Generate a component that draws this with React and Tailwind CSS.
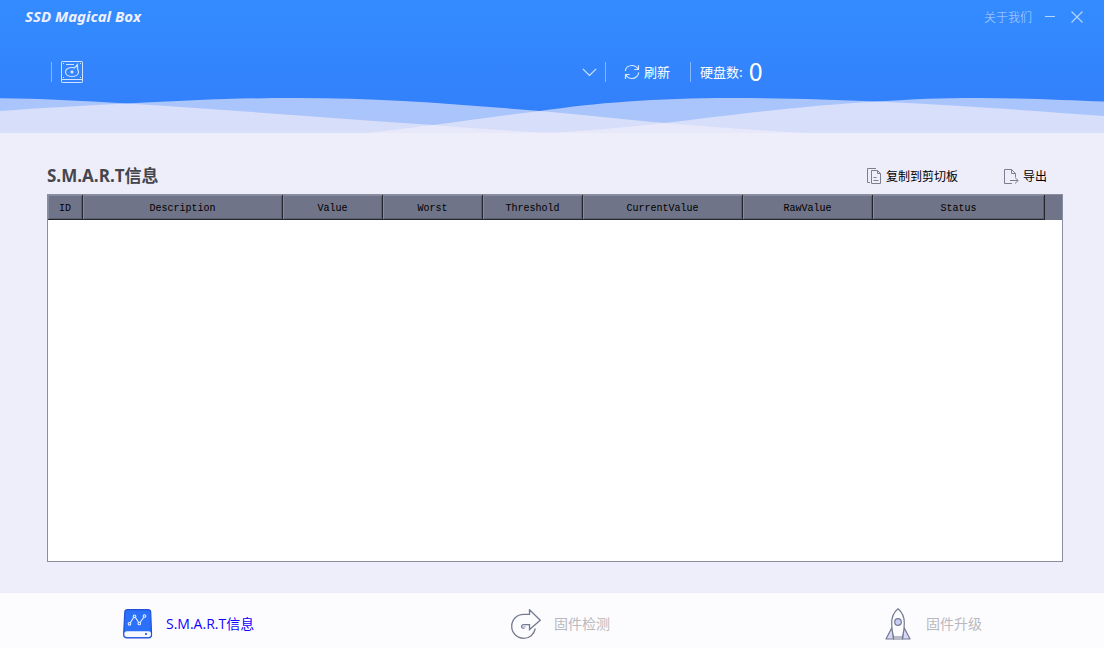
import React from "react";

const columns = [
  ["ID", "w-[35px]"],
  ["Description", "w-[200px]"],
  ["Value", "w-[100px]"],
  ["Worst", "w-[100px]"],
  ["Threshold", "w-[100px]"],
  ["CurrentValue", "w-[160px]"],
  ["RawValue", "w-[130px]"],
  ["Status", "w-auto"],
];

const cjk = "font-['Noto_Sans_CJK_SC',sans-serif]";
const mixed = "font-['Open_Sans','Noto_Sans_CJK_SC',sans-serif]";

function Waves() {
  return (
    <svg className="block h-[35px] w-full" viewBox="0 0 1104 35" preserveAspectRatio="none" fill="#f0eefa" fillOpacity="0.63" aria-hidden="true">
      <path d="M0 0.3C40 0.5 80 3 127 5.5C230 12 330 20 433 27Q490 32 560 35H0Z" />
      <path d="M0 13C40 10 85 7.5 127 5.5C190 2.5 235 0 295 0C380 0 455 6 540 13C585 17 620 21 664 25Q735 31 807 35H0Z" />
      <path d="M367 35Q400 31 433 27C470 22 505 17 540 13C595 5 655 0 732 0C785 0 830 1.5 877 3.5C955 7 1035 13 1104 18V35Z" />
      <path d="M545 35Q605 32 664 25C740 16 800 8 877 3.5C915 1 940 0 978 0C1020 0 1065 2 1104 3.5V35Z" />
    </svg>
  );
}

function DriveIcon() {
  return (
    <svg width="22" height="22" viewBox="0 0 22 22" fill="none" stroke="#cfe2ff" aria-hidden="true">
      <rect x="0.5" y="0.5" width="21" height="21" rx="0.6" />
      <path d="M0.5 18.5H21.5M5 3.5H13" />
      <path d="M16.500 3.500L13.500 6.800C9 5.800 4.500 7.500 4.500 11C4.500 13.700 7.500 15.500 11 15.500S17.500 13.700 17.500 11C17.500 9.500 16.500 8.500 16.500 7.500Z" strokeWidth="1.2" />
      <circle cx="11" cy="11" r="1.2" fill="#cfe2ff" />
      <path d="M2 2.500H3M19 2.500H20M2 16.500H3M19 16.500H20" />
    </svg>
  );
}

function RefreshIcon() {
  return (
    <svg width="16" height="16" viewBox="0 0 16 16" fill="none" stroke="#d9e8ff" strokeWidth="1.2" aria-hidden="true">
      <path d="M1.300 7C1.600 3.800 4.500 1.500 8 1.500C10.500 1.500 12.600 2.700 14 5M14.500 1.200V5.500H10.300" />
      <path d="M14.700 8.500C14.400 12 11.500 14.500 8 14.500C5.500 14.500 3.300 13.300 2 11M1.500 15V10.500H5.700" />
    </svg>
  );
}

function CopyIcon() {
  return (
    <svg width="15" height="17" viewBox="0 0 15 17" fill="none" stroke="#7b7f90" aria-hidden="true">
      <path d="M9 0.500H0.500V14.500H3M4.500 2.500H10.500L13.500 5.500V15.500H4.500ZM10.500 2.500V5.500H13.500M6.500 9.500H9.500M6.500 12.500H11.500" />
    </svg>
  );
}

function ExportIcon() {
  return (
    <svg width="15" height="17" viewBox="0 0 15 17" fill="none" stroke="#7b7f90" aria-hidden="true">
      <path d="M8 15.500H0.500V1.500H7.500L11.500 5.500V9M7.500 1.500V5.500H11.500M6 12.500H14M11 9.500L14.200 12.500L11 15.500" />
    </svg>
  );
}

function SmartIcon() {
  return (
    <svg width="30" height="30" viewBox="0 0 30 30" fill="none" aria-hidden="true">
      <path d="M4.500 0.700H25Q27.500 0.700 27.700 3L28.500 24V26Q28.500 28.800 25.500 28.800H4Q0.700 28.800 0.700 26V24L1.800 3Q2 0.700 4.500 0.700Z" fill="#2a70fa" stroke="#2450d8" strokeWidth="1.2" />
      <path d="M4 22.200H25.500Q28 22.200 28 25Q28 28 25.500 28H4Q1.300 28 1.300 25Q1.300 22.200 4 22.200Z" fill="#f7f8ff" />
      <circle cx="23" cy="25" r="1.100" fill="#2450d8" />
      <g stroke="#e7efff" strokeWidth="1.100">
        <path d="M7.300 13.700L10.500 8.700M12.500 8.500L15.500 13.300M17.200 13.300L20.800 8.300" />
        <circle cx="6.500" cy="14.800" r="1.300" />
        <circle cx="11.500" cy="7.300" r="1.300" />
        <circle cx="16.300" cy="14.500" r="1.300" />
        <circle cx="21.500" cy="7" r="1.300" />
      </g>
    </svg>
  );
}

function DetectIcon() {
  return (
    <svg width="30" height="30" viewBox="0 0 30 30" fill="none" stroke="#75798f" strokeWidth="1.300" aria-hidden="true">
      <path d="M24.300 19.500C23.100 25.500 18.300 29.300 12.700 29.300C6 29.300 0.700 24 0.700 17.300C0.700 10.500 6 5.400 12.700 5.400H18.500V0.800L29.300 11.300L18.500 20.500V15.600H12.700C10.200 15.600 9.900 19.200 12.200 19.200H13.500" />
      <circle cx="13.500" cy="17.400" r="1.600" fill="#c9cdf0" stroke="none" />
    </svg>
  );
}

function RocketIcon() {
  return (
    <svg width="26" height="32" viewBox="0 0 26 32" fill="none" stroke="#75798f" strokeWidth="1.200" strokeLinejoin="round" aria-hidden="true">
      <path d="M7 19.500L1 31H8.500ZM19 19.500L25 31H17.500Z" fill="#d6d8f8" />
      <path d="M13 0.800C8.500 4.500 6.700 9.500 6.700 15C6.700 21 7.500 25.500 8.500 29H17.500C18.500 25.500 19.300 21 19.300 15C19.300 9.500 17.500 4.500 13 0.800Z" fill="#fcfcff" />
      <circle cx="13" cy="14" r="3.300" fill="#c9cdf5" />
      <path d="M8.500 29V31H17.500V29" />
    </svg>
  );
}

const tabs = [
  { label: "S.M.A.R.T信息", Icon: SmartIcon, color: "text-[#1400ff]", gap: "gap-[13px]" },
  { label: "固件检测", Icon: DetectIcon, color: "text-[#b9b9bd]", gap: "gap-[13px]" },
  { label: "固件升级", Icon: RocketIcon, color: "text-[#b9b9bd]", gap: "gap-[15px]" },
];

export default function App() {
  return (
    <div className={`flex min-h-screen flex-col bg-[#eeedfa] text-xs text-black ${cjk}`}>
      <header className="flex flex-col bg-linear-to-b from-[#338cff] to-[#337dfa]">
        <div className="flex h-8 items-center justify-between pr-5 pl-[25px]">
          <h1 className="font-['Noto_Sans',sans-serif] text-[15px] font-bold text-[#eef0ff] italic">SSD Magical Box</h1>
          <div className="flex items-center pt-0.5 text-[#b4d3ff]">
            <a href="#about" className="mr-3 font-light">关于我们</a>
            <button type="button" aria-label="最小化" className="mr-3.5">
              <svg width="12" height="14" viewBox="0 0 12 14" stroke="currentColor" aria-hidden="true"><path d="M1 6.500H11" /></svg>
            </button>
            <button type="button" aria-label="关闭">
              <svg width="14" height="14" viewBox="0 0 14 14" stroke="currentColor" strokeWidth="1.200" aria-hidden="true"><path d="M1.500 1.500L12.500 12.500M12.500 1.500L1.500 12.500" /></svg>
            </button>
          </div>
        </div>
        <div className="flex h-[66px] items-center pt-3.5 pl-[51px] text-white">
          <div className="flex h-5 items-center border-l border-[#84b6ff] pl-[9px]">
            <DriveIcon />
          </div>
          <div className="relative flex h-6 w-[522px] items-center">
            <select aria-label="硬盘" className="h-full w-full appearance-none bg-transparent px-2 outline-none">
              <option value=""></option>
            </select>
            <svg className="pointer-events-none absolute right-2 top-2" width="15" height="9" viewBox="0 0 15 9" fill="none" stroke="#cfe2ff" strokeWidth="1.200" aria-hidden="true"><path d="M0.800 0.800L7.500 7.500L14.200 0.800" /></svg>
          </div>
          <button type="button" className="flex h-5 items-center gap-1 border-l border-[#84b6ff] pr-5 pl-[18px] text-[13px]">
            <RefreshIcon />
            刷新
          </button>
          <div className="flex h-5 items-center gap-1.5 border-l border-[#84b6ff] pl-[9px] text-[13px]">
            <span>硬盘数:</span>
            <span className="pb-1 text-[25px] leading-5">0</span>
          </div>
        </div>
        <Waves />
      </header>

      <main className="flex flex-1 flex-col pt-[31px] pr-[41px] pb-[31px] pl-[47px]">
        <div className="flex h-[30px] items-center justify-between pr-4 pb-1.5">
          <h2 className={`text-[17px] font-bold text-[#45464c] ${mixed}`}>S.M.A.R.T信息</h2>
          <div className="flex gap-[46px]">
            <button type="button" className="flex items-center gap-1">
              <CopyIcon />
              复制到剪切板
            </button>
            <button type="button" className="flex items-center gap-1">
              <ExportIcon />
              导出
            </button>
          </div>
        </div>
        <div className="flex-1 border border-[#8a8ea0] bg-white">
          <table className="w-full table-fixed border-separate border-spacing-0 bg-[#6f7488]">
            <thead>
              <tr>
                {columns.map(([name, width]) => (
                  <th key={name} scope="col" className={`h-[25px] border-r border-b border-[#24262e] p-0 pt-1 text-center font-['Liberation_Mono',monospace] text-[10px] font-normal shadow-[inset_1px_1px_0_#858a9c,inset_-1px_-1px_0_#5b5f70] ${width}`}>
                    {name}
                  </th>
                ))}
                <td className="w-[17px] border-b border-[#6f7488] p-0" />
              </tr>
            </thead>
            <tbody />
          </table>
        </div>
      </main>

      <nav className={`grid h-[55px] grid-cols-[388fr_374fr_219fr] items-center bg-[#fcfcff] pt-1.5 pl-[123px] text-sm ${mixed}`}>
        {tabs.map(({ label, Icon, color, gap }) => (
          <button key={label} type="button" className={`flex items-center ${gap} ${color}`}>
            <Icon />
            {label}
          </button>
        ))}
      </nav>
    </div>
  );
}
